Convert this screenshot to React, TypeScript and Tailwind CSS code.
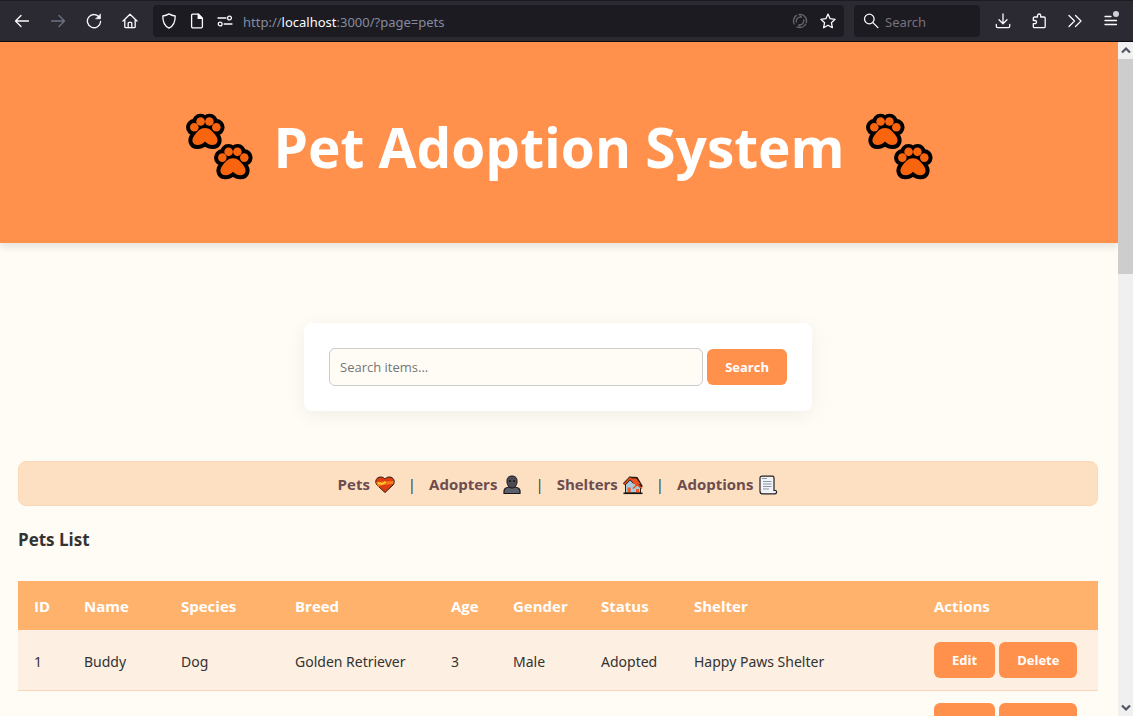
import type { ReactNode } from 'react';

const TOOL_BTN = 'flex h-8 w-9 items-center justify-center text-[#fbfbfe]';

function Icon({ children, className = '' }: { children: ReactNode; className?: string }) {
  return (
    <svg
      viewBox="0 0 16 16"
      className={`h-4 w-4 shrink-0 ${className}`}
      fill="none"
      stroke="currentColor"
      strokeWidth="1.3"
      strokeLinecap="round"
      strokeLinejoin="round"
      aria-hidden="true"
    >
      {children}
    </svg>
  );
}

function Toolbar() {
  return (
    <div className="flex h-[42px] shrink-0 items-center border-t border-b border-t-[#1c1b22] border-b-[#0c0c0d] bg-[#2b2a33] px-1 font-['Noto_Sans','Open_Sans',sans-serif] text-[13px]">
      <button aria-label="Back" className={TOOL_BTN}>
        <Icon><path d="M14.5 8H1.5M7 2.500 1.500 8 7 13.500" /></Icon>
      </button>
      <button aria-label="Forward" className="flex h-8 w-9 items-center justify-center text-[#6d7385]">
        <Icon><path d="M1.500 8h13M9 2.500 14.500 8 9 13.500" /></Icon>
      </button>
      <button aria-label="Reload" className={TOOL_BTN}>
        <Icon>
          <path d="M13.600 4.600A6.600 6.600 0 1 0 14.600 8.500" />
          <path d="M14.500 1.200v4.600H9.900z" fill="currentColor" strokeWidth="0.600" />
        </Icon>
      </button>
      <button aria-label="Home" className={TOOL_BTN}>
        <Icon>
          <path d="M1 8 8 1.200 15 8M2.800 6.500v7.200c0 .6.400 1 1 1h8.400c.6 0 1-.4 1-1V6.500" />
          <path d="M6.200 14.500v-4.300c0-.5.400-.9.900-.9h1.800c.5 0 .9.400.9.900v4.300" />
        </Icon>
      </button>
      <div className="ml-[5px] flex h-8 min-w-0 flex-1 items-center rounded bg-[#1c1b22] px-2 text-[#fbfbfe]">
        <Icon><path d="M8 .9c2 1.300 4 1.900 6.200 2.100C14.300 9 12.600 13 8 15.200 3.400 13 1.700 9 1.800 3 4 2.800 6 2.200 8 .9z" /></Icon>
        <Icon className="ml-3">
          <path d="M3.800 1.200h5.700l3.900 3.900v8.500c0 .7-.5 1.200-1.200 1.200H3.800c-.7 0-1.200-.5-1.200-1.200V2.400c0-.7.500-1.200 1.200-1.200z" />
          <path d="M9.200 1.200v4.200h4.200z" fill="currentColor" />
        </Icon>
        <Icon className="ml-3">
          <path d="M1 5h8M7.200 11H15" />
          <circle cx="12.500" cy="5" r="1.900" />
          <circle cx="3.200" cy="11" r="1.900" />
        </Icon>
        <label htmlFor="address" className="sr-only">Address</label>
        <div className="relative ml-2.5 h-8 min-w-0 flex-1">
          <input
            id="address"
            defaultValue="http://localhost:3000/?page=pets"
            className="h-8 w-full bg-transparent pt-0.5 text-transparent caret-white outline-none"
          />
          <div aria-hidden="true" className="pointer-events-none absolute inset-0 pt-0.5 leading-[30px] whitespace-nowrap text-[#858b9e]">
            http://<span className="text-[#fbfbfe]">localhost</span>:3000/?page=pets
          </div>
        </div>
        <Icon className="text-[#65636b]">
          <path d="M13.800 11A6.600 6.600 0 0 1 5 13.900M2.200 11A6.600 6.600 0 0 1 4.500 2.400M7 1.400a6.600 6.600 0 0 1 7.400 8" />
          <path d="M4.300 9A4 4 0 0 1 8 4.200h1.500L8 2.800M11.700 7A4 4 0 0 1 8 11.800H6.500L8 13.200" />
        </Icon>
        <Icon className="ml-3"><path d="m8 1.100 2.100 4.600 5 .6-3.700 3.400 1 5L8 12.200l-4.400 2.500 1-5L.9 6.300l5-.6z" /></Icon>
      </div>
      <div className="ml-2.5 flex h-8 w-[126px] items-center rounded bg-[#1c1b22] px-[9px] text-[#fbfbfe]">
        <Icon className="mr-1.5"><circle cx="6.300" cy="6" r="4.800" /><path d="m9.900 9.600 5 5" /></Icon>
        <label htmlFor="web-search" className="sr-only">Search the web</label>
        <input id="web-search" placeholder="Search" className="h-8 w-full min-w-0 bg-transparent pt-0.5 outline-none placeholder:text-[#77717a]" />
      </div>
      <button aria-label="Downloads" className={`ml-[5px] ${TOOL_BTN}`}>
        <Icon><path d="M8 1v9.500M4 6.800l4 3.900 4-3.900M1.300 11.500v1.700c0 .8.600 1.400 1.400 1.400h10.600c.8 0 1.400-.6 1.400-1.400v-1.700" /></Icon>
      </button>
      <button aria-label="Extensions" className={TOOL_BTN}>
        <Icon><path d="M2.300 5.200c0-.7.500-1.200 1.200-1.200h3V2.600a1.600 1.600 0 0 1 3.200 0V4h3.300c.7 0 1.200.5 1.200 1.200v8.300c0 .7-.5 1.200-1.200 1.200H3.500c-.7 0-1.200-.5-1.200-1.200v-2.800h1.600a1.600 1.600 0 0 0 0-3.200H2.300z" /></Icon>
      </button>
      <button aria-label="More tools" className={TOOL_BTN}>
        <Icon><path d="m2 2.500 5.500 5.500L2 13.500M8.500 2.500 14 8l-5.500 5.500" /></Icon>
      </button>
      <button aria-label="Menu" className={`relative ${TOOL_BTN}`}>
        <Icon><path d="M2 3.500h6M2 7.500h11.500M2 11.500h11.500" /></Icon>
        <span className="absolute top-1.5 right-2.5 h-1.5 w-1.5 rounded-full bg-[#d0d0d6]" />
      </button>
    </div>
  );
}

const PAD_PATH =
  'M20 15c-5 0-7 3-10 6.500-5 6-2 10.500 2.500 10.500 3.500 0 5-1.500 7.500-3.500 2.500 2 4 3.500 7.500 3.500 4.500 0 7.500-4.500 2.500-10.500C27 18 25 15 20 15z';

function Paw() {
  return (
    <g>
      <g fill="#000" stroke="#000" strokeWidth="8" strokeLinejoin="round">
        <circle cx="9.300" cy="14.300" r="4.300" />
        <circle cx="15.400" cy="9" r="4.300" />
        <circle cx="24.600" cy="9" r="4.300" />
        <circle cx="31.300" cy="14.300" r="4.300" />
        <path d={PAD_PATH} />
      </g>
      <g fill="#f9650f">
        <circle cx="9.300" cy="14.300" r="4.300" />
        <circle cx="15.600" cy="8.500" r="4.300" />
        <circle cx="24.400" cy="8.500" r="4.300" />
        <circle cx="31.300" cy="14.300" r="4.300" />
        <path d={PAD_PATH} />
      </g>
    </g>
  );
}

function PawPrints() {
  return (
    <svg viewBox="0 0 68 68" className="h-[68px] w-[68px] shrink-0" aria-hidden="true">
      <Paw />
      <g transform="translate(28 30.300)"><Paw /></g>
    </svg>
  );
}

const EMOJI = 'h-5 w-5 shrink-0';

const HeartIcon = () => (
  <svg viewBox="0 0 20 20" className={EMOJI} aria-hidden="true">
    <path d="M10 17.500 2 10C-1 6 2 2 5.500 2 8 2 9 3 10 4c1-1 2-2 4.500-2C18 2 21 6 18 10z" fill="#dc3d10" stroke="#2b1713" />
    <path d="m1 7 18-1-1 3-11 1-4 2z" fill="#f47b18" />
    <path d="m3 7 4 1 3-2 1 2-4 2-4-1z" fill="#ffc52c" />
  </svg>
);

const PersonIcon = () => (
  <svg viewBox="0 0 20 20" className={EMOJI} aria-hidden="true">
    <path d="M2 18.500V16c0-2.500 2-3.500 5-4h6c3 .5 5 1.500 5 4v2.500z" fill="#5c606b" stroke="#15151a" strokeWidth="1.200" />
    <path d="M10 1C6.500 1 4.600 3 5 7c.3 3.500 2 6 5 6s4.700-2.500 5-6c.4-4-1.500-6-5-6z" fill="#4a4b52" stroke="#15151a" />
    <path d="M7 6h2M11 6h2" stroke="#17171b" strokeWidth="1.400" />
  </svg>
);

const HouseIcon = () => (
  <svg viewBox="0 0 20 20" className={EMOJI} aria-hidden="true">
    <path d="M2.500 8.500 7 4l6 5 4.500 3.500V18h-15z" fill="#a9cadb" stroke="#25211f" />
    <path d="M1 9.500 7 3.200l4.500 4.300M7 3.200l6.500.3 5 8.500" fill="none" stroke="#201815" strokeWidth="3.200" />
    <path d="m7 3.200 6.500.3 4.500 6.500-2.500-1-3 1.500z" fill="#ee5119" />
    <path d="M1 9.500 7 3.200l4.500 4.300M10 13.500l4.500-4 4.500 4" fill="none" stroke="#ee5119" strokeWidth="1.600" />
    <path d="M4.500 12.500h3.200V18H4.500zM13 14h3v4h-3z" fill="#f05a28" />
    <path d="M.5 18.300h19" stroke="#151515" strokeWidth="1.600" />
  </svg>
);

const ScrollIcon = () => (
  <svg viewBox="0 0 20 20" className={EMOJI} aria-hidden="true">
    <path d="M4 1.200h10.500c1 0 1.500.8 1.500 1.800v12.500h1.500c1.500 0 1.500 3.300-.5 3.300H4.500c-2 0-2.500-1-2.500-2.800V3c0-1 .8-1.800 2-1.800z" fill="#f2f3f6" stroke="#202026" strokeWidth="1.200" />
    <path d="M4 3.500h5M5 6.500h8.500M5 9h8.500M5 11.500h8.500M5 14h6" stroke="#8a95a8" />
  </svg>
);

const NAV = [
  { label: 'Pets', Emoji: HeartIcon },
  { label: 'Adopters', Emoji: PersonIcon },
  { label: 'Shelters', Emoji: HouseIcon },
  { label: 'Adoptions', Emoji: ScrollIcon },
];

const COLUMNS = [
  { title: 'ID', width: 'w-[50px]' },
  { title: 'Name', width: 'w-[97px]' },
  { title: 'Species', width: 'w-[114px]' },
  { title: 'Breed', width: 'w-[156px]' },
  { title: 'Age', width: 'w-[62px]' },
  { title: 'Gender', width: 'w-[88px]' },
  { title: 'Status', width: 'w-[93px]' },
  { title: 'Shelter', width: 'w-[240px]' },
  { title: 'Actions', width: 'w-[180px]' },
];

const ROWS = [
  ['1', 'Buddy', 'Dog', 'Golden Retriever', '3', 'Male', 'Adopted', 'Happy Paws Shelter'],
  ['', '', '', '', '', '', '', ''],
];

function ActionButton({ children }: { children: ReactNode }) {
  return (
    <button className="h-9 rounded-md bg-[#ff914d] px-[18px] pt-px text-[13px] font-bold text-white">{children}</button>
  );
}

export default function App() {
  return (
    <div className="flex h-screen flex-col overflow-hidden">
      <Toolbar />
      <div className="flex min-h-0 flex-1">
        <div className="min-w-0 flex-1 overflow-hidden bg-[#fffcf5] font-['Open_Sans','Noto_Sans',sans-serif] text-[15px] text-[#333]">
          <header className="flex items-center justify-center gap-5 bg-[#ff914d] px-4 pt-16 pb-14 shadow-[0_4px_8px_rgba(0,0,0,0.1)]">
            <PawPrints />
            <h1 className="text-[55px] leading-[81px] font-bold whitespace-nowrap text-white">Pet Adoption System</h1>
            <PawPrints />
          </header>
          <main className="pt-20 pr-5 pl-[18px]">
            <form className="mx-auto flex w-full max-w-[508px] items-center gap-1 rounded-lg bg-white p-[25px] shadow-[0_4px_20px_rgba(0,0,0,0.06)]">
              <label htmlFor="item-search" className="sr-only">Search items</label>
              <input
                id="item-search"
                placeholder="Search items..."
                className="h-[38px] min-w-0 flex-1 rounded-md border border-[#ccc] bg-[#fffcf5] px-2.5 text-[13px] outline-none placeholder:text-[#757575]"
              />
              <ActionButton>Search</ActionButton>
            </form>
            <nav className="mt-[50px] flex h-[45px] items-center justify-center gap-[13px] rounded-lg border border-[#fbd9b8] bg-[#fde0c2] pt-0.5">
              {NAV.map(({ label, Emoji }, i) => (
                <div key={label} className="flex items-center gap-[13px]">
                  {i > 0 && <span>|</span>}
                  <a href={`?page=${label.toLowerCase()}`} className="flex items-center gap-[5px] font-bold text-[#6d4c4f]">
                    {label} <Emoji />
                  </a>
                </div>
              ))}
            </nav>
            <h2 className="mt-5 text-[17px] leading-7 font-bold">Pets List</h2>
            <table className="mt-[27px] w-full table-fixed border-separate border-spacing-0 text-left">
              <thead>
                <tr className="h-[49px] bg-[#ffb26b] text-white">
                  {COLUMNS.map(({ title, width }) => (
                    <th key={title} className={`px-4 pt-0.5 pb-0 font-bold ${width}`}>{title}</th>
                  ))}
                </tr>
              </thead>
              <tbody>
                {ROWS.map((cells, r) => (
                  <tr key={r} className="h-[61px] odd:bg-[#fdefe1]">
                    {cells.map((cell, c) => (
                      <td key={c} className="border-b border-[#f8d5b8] px-4 pt-0.5 pb-0 font-['Noto_Sans','Open_Sans',sans-serif] text-[14px] whitespace-nowrap">{cell}</td>
                    ))}
                    <td className="border-b border-[#f8d5b8] py-0 pl-4">
                      <div className="flex gap-1">
                        <ActionButton>Edit</ActionButton>
                        <ActionButton>Delete</ActionButton>
                      </div>
                    </td>
                  </tr>
                ))}
              </tbody>
            </table>
          </main>
        </div>
        <div className="flex w-[15px] shrink-0 flex-col items-center bg-[#f0f0f0] text-[#505562]" aria-hidden="true">
          <svg viewBox="0 0 15 17" className="h-[17px] w-[15px] shrink-0" fill="none" stroke="currentColor" strokeWidth="2.200"><path d="m4 10.500 4-4 4 4" /></svg>
          <div className="h-[215px] w-full bg-[#cdcdcd]" />
          <svg viewBox="0 0 15 17" className="mt-auto h-[17px] w-[15px] shrink-0" fill="none" stroke="currentColor" strokeWidth="2.200"><path d="m4 6.500 4 4 4-4" /></svg>
        </div>
      </div>
    </div>
  );
}
